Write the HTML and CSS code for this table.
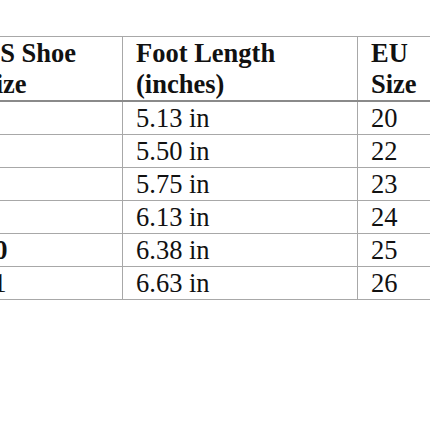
FILE: index.html
```html
<!DOCTYPE html>
<html>
<head>
<meta charset="utf-8">
<link rel="stylesheet" href="styles.css">
</head>
<body>
<div class="wrap">
<table class="sizes">
<colgroup><col class="c1"><col class="c2"><col class="c3"></colgroup>
<thead>
<tr><th>US Shoe Size</th><th>Foot Length (inches)</th><th>EU Size</th></tr>
</thead>
<tbody>
<tr><td>5</td><td>5.13 in</td><td>20</td></tr>
<tr><td>6</td><td>5.50 in</td><td>22</td></tr>
<tr><td>7</td><td>5.75 in</td><td>23</td></tr>
<tr><td>8</td><td>6.13 in</td><td>24</td></tr>
<tr><td class="b">10</td><td>6.38 in</td><td>25</td></tr>
<tr><td>11</td><td>6.63 in</td><td>26</td></tr>
</tbody>
</table>
</div>
</body>
</html>
```
FILE: styles.css
```css
html, body {
  margin: 0;
  padding: 0;
  background: #ffffff;
  overflow: hidden;
  width: 430px;
  height: 430px;
}
.wrap {
  padding-top: 36px;
  margin-left: -33px;
  width: 480px;
}
.sizes {
  border-collapse: collapse;
  table-layout: fixed;
  width: 464px;
  font-family: "Liberation Serif", "Times New Roman", serif;
  font-size: 26.5px;
  color: #111111;
}
.c1 { width: 155px; }
.c2 { width: 235px; }
.c3 { width: 74px; }
.sizes th, .sizes td {
  border: 1px solid #a8a8a8;
  text-align: left;
  vertical-align: top;
  padding: 1px 8px 1px 13px;
  line-height: 30px;
}
.sizes th {
  font-weight: bold;
  line-height: 31px;
  padding-top: 1px;
  padding-bottom: 0;
}
.sizes thead tr th {
  border-bottom: 2px solid #8a8a8a;
}
.sizes td.b {
  font-weight: bold;
}
```
